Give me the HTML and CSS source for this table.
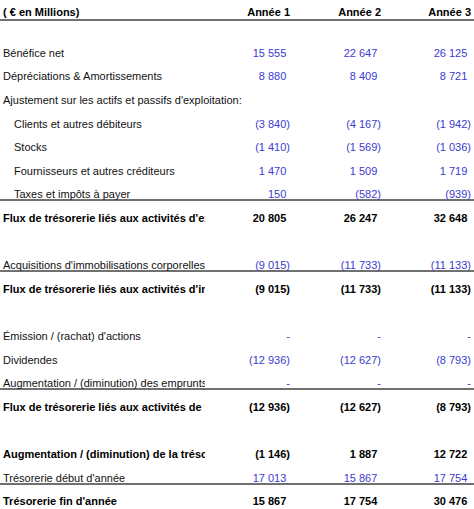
FILE: index.html
```html
<!DOCTYPE html>
<html lang="fr">
<head>
<meta charset="utf-8">
<title>Flux de trésorerie</title>
<link rel="stylesheet" href="styles.css">
</head>
<body>
<div class="sheet">
  <div class="row head line">
    <div class="lbl b">( € en Millions)</div>
    <div class="num b">Année 1</div>
    <div class="num b">Année 2</div>
    <div class="num b">Année 3</div>
  </div>
  <div class="gap"></div>

  <div class="row">
    <div class="lbl">Bénéfice net</div>
    <div class="num in pos">15 555</div>
    <div class="num in pos">22 647</div>
    <div class="num in pos">26 125</div>
  </div>
  <div class="row">
    <div class="lbl">Dépréciations &amp; Amortissements</div>
    <div class="num in pos">8 880</div>
    <div class="num in pos">8 409</div>
    <div class="num in pos">8 721</div>
  </div>
  <div class="row">
    <div class="lbl span">Ajustement sur les actifs et passifs d'exploitation:</div>
  </div>
  <div class="row">
    <div class="lbl ind">Clients et autres débiteurs</div>
    <div class="num in">(3 840)</div>
    <div class="num in">(4 167)</div>
    <div class="num in">(1 942)</div>
  </div>
  <div class="row">
    <div class="lbl ind">Stocks</div>
    <div class="num in">(1 410)</div>
    <div class="num in">(1 569)</div>
    <div class="num in">(1 036)</div>
  </div>
  <div class="row">
    <div class="lbl ind">Fournisseurs et autres créditeurs</div>
    <div class="num in pos">1 470</div>
    <div class="num in pos">1 509</div>
    <div class="num in pos">1 719</div>
  </div>
  <div class="row line">
    <div class="lbl ind">Taxes et impôts à payer</div>
    <div class="num in pos">150</div>
    <div class="num in">(582)</div>
    <div class="num in">(939)</div>
  </div>
  <div class="row">
    <div class="lbl b">Flux de trésorerie liés aux activités d'exploitation</div>
    <div class="num b pos">20 805</div>
    <div class="num b pos">26 247</div>
    <div class="num b pos">32 648</div>
  </div>
  <div class="row"></div>

  <div class="row line">
    <div class="lbl">Acquisitions d'immobilisations corporelles</div>
    <div class="num in">(9 015)</div>
    <div class="num in">(11 733)</div>
    <div class="num in">(11 133)</div>
  </div>
  <div class="row">
    <div class="lbl b">Flux de trésorerie liés aux activités d'investissement</div>
    <div class="num b">(9 015)</div>
    <div class="num b">(11 733)</div>
    <div class="num b">(11 133)</div>
  </div>
  <div class="row"></div>

  <div class="row">
    <div class="lbl">Émission / (rachat) d'actions</div>
    <div class="num in">-</div>
    <div class="num in">-</div>
    <div class="num in">-</div>
  </div>
  <div class="row">
    <div class="lbl">Dividendes</div>
    <div class="num in">(12 936)</div>
    <div class="num in">(12 627)</div>
    <div class="num in">(8 793)</div>
  </div>
  <div class="row line">
    <div class="lbl">Augmentation / (diminution) des emprunts</div>
    <div class="num in">-</div>
    <div class="num in">-</div>
    <div class="num in">-</div>
  </div>
  <div class="row">
    <div class="lbl b">Flux de trésorerie liés aux activités de financement</div>
    <div class="num b">(12 936)</div>
    <div class="num b">(12 627)</div>
    <div class="num b">(8 793)</div>
  </div>
  <div class="row"></div>

  <div class="row">
    <div class="lbl b">Augmentation / (diminution) de la trésorerie</div>
    <div class="num b">(1 146)</div>
    <div class="num b pos">1 887</div>
    <div class="num b pos">12 722</div>
  </div>
  <div class="row line">
    <div class="lbl">Trésorerie début d'année</div>
    <div class="num in pos">17 013</div>
    <div class="num in pos">15 867</div>
    <div class="num in pos">17 754</div>
  </div>
  <div class="row">
    <div class="lbl b">Trésorerie fin d'année</div>
    <div class="num b pos">15 867</div>
    <div class="num b pos">17 754</div>
    <div class="num b pos">30 476</div>
  </div>
</div>
</body>
</html>
```

FILE: styles.css
```css
html, body {
  margin: 0;
  padding: 0;
  background: #ffffff;
}

.sheet {
  width: 474px;
  font-family: "Liberation Sans", Arial, sans-serif;
  font-size: 11px;
  color: #111111;
}

.row {
  display: grid;
  grid-template-columns: 205px 88px 91px 90px;
  align-items: end;
  height: 23.6px;
  box-sizing: border-box;
}

.head {
  height: 21px;
  padding-bottom: 2px;
}

.gap {
  height: 15.3px;
}

.line {
  box-shadow: inset 0 -2px #707070;
}

.lbl {
  line-height: 13px;
  padding-left: 3px;
  white-space: nowrap;
  overflow: hidden;
}

.lbl.ind {
  padding-left: 14px;
}

.lbl.span {
  grid-column: 1 / -1;
}

.num {
  line-height: 13px;
  text-align: right;
  padding-right: 3px;
  white-space: nowrap;
}

.b {
  font-weight: bold;
  color: #000000;
}

.in {
  color: #3b3bd0;
}

.pos::after {
  content: ")";
  visibility: hidden;
}
```
